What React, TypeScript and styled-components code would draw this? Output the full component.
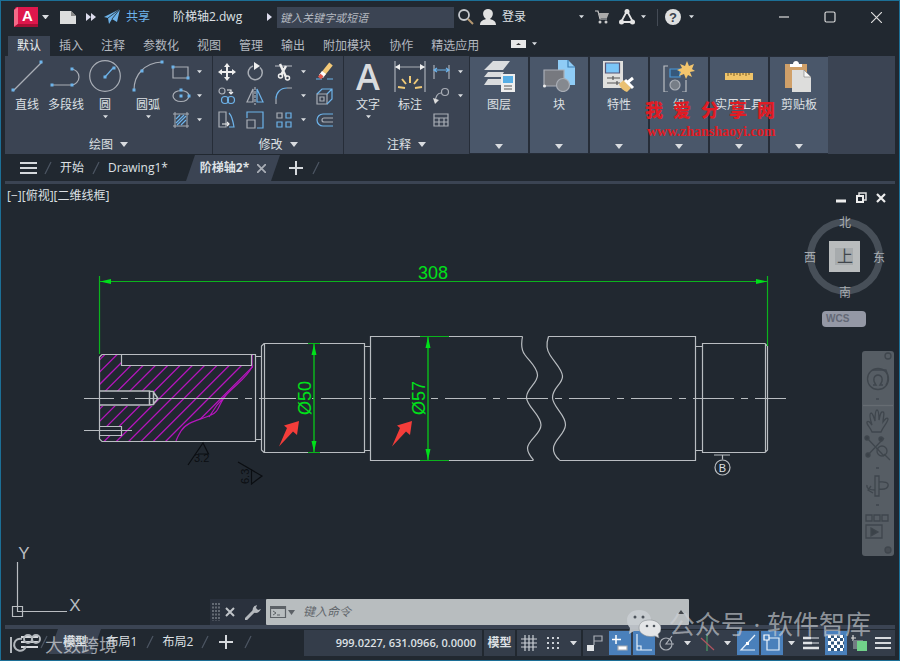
import React from "react";
import styled, { createGlobalStyle, css } from "styled-components";

const cjk = `"Open Sans", "Noto Sans CJK SC", sans-serif`;
const c = {
  edge: "#1c6f96",
  dark: "#212830",
  ribbon: "#3b4453",
  tile: "#4a576a",
  line: "#262d38",
  text: "#dde0e4",
  muted: "#b4b9c0",
  blue: "#6db3ea",
  gray: "#a9aeb6",
  green: "#00e01a",
  wire: "#b9bdc1",
  pink: "#b615bd",
};

const Global = createGlobalStyle`
  * { box-sizing: border-box; }
  body { margin: 0; background: ${c.dark}; font: 12px/16px ${cjk}; color: ${c.text}; }
  button, input { font: inherit; color: inherit; border: 0; background: none; padding: 0; margin: 0; }
  button { cursor: pointer; white-space: nowrap; }
  svg { display: block; flex: none; }
`;

const Frame = styled.div`
  position: relative;
  display: flex;
  flex-direction: column;
  min-height: 100vh;
  border: 1px solid ${c.edge};
  overflow: hidden;
`;

/* ---------- title bar ---------- */
const TitleBar = styled.header`
  display: flex;
  align-items: center;
  height: 32px;
  padding-left: 13px;
`;
const Tool = styled.button<{ $w: number }>`
  display: flex;
  align-items: center;
  justify-content: center;
  gap: 6px;
  flex: none;
  width: ${(p) => p.$w}px;
  height: 24px;
`;
const ShareLabel = styled.span`
  color: ${c.blue};
`;
const FileName = styled.span`
  width: 105px;
  padding-left: 17px;
  flex: none;
  white-space: nowrap;
`;
const TitleSpace = styled.div`
  flex: none;
  width: 60px;
`;
const SearchInput = styled.input`
  flex: 0 0 177px;
  height: 21px;
  padding-left: 3px;
  background: ${c.ribbon};
  font-size: 11px;
  font-style: italic;
  &::placeholder {
    color: ${c.muted};
    opacity: 1;
  }
`;
const Push = styled.div`
  flex: 1;
`;
const Rule = styled.div`
  flex: none;
  width: 1px;
  height: 17px;
  margin: 0 7px 0 9px;
  background: #444b55;
`;

/* ---------- ribbon ---------- */
const RibbonTabs = styled.nav`
  display: flex;
  align-items: flex-end;
  height: 23px;
  padding-left: 7px;
`;
const RibbonTab = styled.button<{ $on?: boolean }>`
  height: 20px;
  padding: 0 9px;
  color: ${(p) => (p.$on ? "#eceef0" : c.muted)};
  background: ${(p) => (p.$on ? c.ribbon : "none")};
`;
const Ribbon = styled.section`
  display: flex;
  height: 98px;
  margin: 0 4px;
  background: ${c.ribbon};
`;
const Panel = styled.div<{ $w: number }>`
  display: flex;
  flex-direction: column;
  flex: none;
  width: ${(p) => p.$w}px;
  border-right: 1px solid ${c.line};
`;
const PanelBody = styled.div`
  display: flex;
  flex: 1;
  padding: 4px 0 0 2px;
`;
const PanelTitle = styled.button`
  display: flex;
  align-items: center;
  justify-content: center;
  gap: 7px;
  height: 19px;
`;
const BigButton = styled.button<{ $w?: number }>`
  display: flex;
  flex-direction: column;
  align-items: center;
  justify-content: flex-start;
  flex: none;
  width: ${(p) => p.$w ?? 40}px;
  svg {
    overflow: visible;
  }
  svg + span {
    margin: 5px 0 2px;
  }
`;
const SmallGrid = styled.div<{ $cols: string }>`
  display: grid;
  align-self: flex-start;
  grid-template-columns: ${(p) => p.$cols};
  grid-auto-rows: 24px;
`;
const Small = styled.button`
  display: flex;
  align-items: center;
  justify-content: center;
`;
const Tiles = styled.div`
  display: flex;
  gap: 2px;
  padding: 1px 0;
  background: ${c.line};
`;
const Tile = styled.button`
  display: flex;
  flex-direction: column;
  align-items: center;
  justify-content: flex-start;
  width: 58px;
  height: 96px;
  padding: 3px 0 4px;
  background: ${c.tile};
  span {
    margin-top: 5px;
  }
  svg:last-child {
    margin-top: auto;
  }
`;

/* ---------- file tabs and layout tabs ---------- */
const FileTabs = styled.nav`
  display: flex;
  align-items: center;
  height: 30px;
  margin: 0 4px;
  padding: 1px 0 0 13px;
  border-bottom: 3px solid ${c.ribbon};
`;
const DocTab = styled.button<{ $w: number; $on?: boolean }>`
  display: flex;
  align-items: center;
  justify-content: center;
  gap: 8px;
  align-self: stretch;
  flex: none;
  width: ${(p) => p.$w}px;
  ${(p) =>
    p.$on &&
    css`
      background: ${c.ribbon};
      font-weight: 700;
      clip-path: polygon(9px 0, 100% 0, calc(100% - 9px) 100%, 0 100%);
    `}
`;
const TabGap = styled.div`
  flex: none;
  width: 16px;
`;

/* ---------- canvas ---------- */
const Canvas = styled.main`
  position: relative;
  flex: 1;
  min-height: 441px;
`;
const Drawing = styled.svg`
  position: absolute;
  inset: 0;
  width: 100%;
  height: 100%;
`;
const ViewLabel = styled.div`
  position: absolute;
  left: 6px;
  top: 4px;
`;
const WindowKeys = styled.div`
  position: absolute;
  right: 11px;
  top: 2px;
  display: flex;
  gap: 6px;
`;
const Cube = styled.svg`
  position: absolute;
  right: 11px;
  top: 29px;
`;
const Wcs = styled.button`
  position: absolute;
  right: 33px;
  top: 127px;
  width: 44px;
  height: 16px;
  padding-left: 4px;
  border-radius: 4px;
  background: #9498a5;
  color: #636876;
  font: 700 10px/16px "Liberation Sans", sans-serif;
  text-align: left;
`;
const NavBar = styled.div`
  position: absolute;
  right: 5px;
  top: 167px;
  width: 32px;
  border-radius: 3px;
  background: #565d64;
`;
const CommandBar = styled.form`
  position: absolute;
  left: 209px;
  right: 210px;
  bottom: 0;
  display: flex;
  height: 26px;
`;
const CommandTools = styled.div`
  display: flex;
  align-items: center;
  width: 56px;
  background: #2a313d;
`;
const CommandField = styled.label`
  display: flex;
  align-items: center;
  flex: 1;
  gap: 8px;
  padding: 0 4px;
  border-radius: 1px;
  background: #b8bdbf;
`;
const CommandInput = styled.input`
  flex: 1;
  min-width: 0;
  font-style: italic;
  &::placeholder {
    color: #62676c;
    opacity: 1;
  }
`;

/* ---------- status bar ---------- */
const StatusBar = styled.footer`
  display: flex;
  height: 35px;
  margin: 0 4px;
  border-top: 4px solid ${c.ribbon};
`;
const LayoutTabs = styled.nav`
  display: flex;
  align-items: center;
  height: 25px;
  padding-left: 14px;
  flex: 1;
`;
const StatusTools = styled.div`
  display: flex;
  gap: 2px;
  height: 26px;
  margin-top: 1px;
`;
const Coordinates = styled.output`
  width: 178px;
  padding-right: 6px;
  background: #343d4a;
  text-align: right;
  font-size: 11px;
  line-height: 26px;
  font-weight: 600;
`;
const Group = styled.div`
  display: flex;
  align-items: center;
  background: #343d4a;
`;
const Toggle = styled.button<{ $w?: number; $on?: boolean; $bold?: boolean }>`
  display: flex;
  align-items: center;
  justify-content: center;
  width: ${(p) => p.$w ?? 24}px;
  height: 24px;
  font-weight: ${(p) => (p.$bold ? 700 : 400)};
  background: ${(p) => (p.$on ? "#4a80bb" : "none")};
  border-left: ${(p) => (p.$on ? "2px solid #343d4a" : "0")};
`;

/* ---------- overlays ---------- */
const RedMark = styled.div`
  position: absolute;
  left: 644px;
  top: 97px;
  color: #e01c24;
  pointer-events: none;
`;
const RedTitle = styled.div`
  display: flex;
  gap: 10px;
  font: 900 18px/22px "Noto Sans CJK SC", sans-serif;
`;
const RedUrl = styled.div`
  padding-left: 2px;
  font: 700 14px/24px "Liberation Serif", serif;
`;
const BrandMark = styled.div`
  position: absolute;
  right: 28px;
  bottom: 20px;
  display: flex;
  align-items: center;
  gap: 8px;
  font: 26px/32px ${cjk};
  color: rgba(205, 209, 214, 0.65);
  pointer-events: none;
`;
const CornerMark = styled.div`
  position: absolute;
  left: 8px;
  bottom: 4px;
  display: flex;
  align-items: center;
  gap: 2px;
  font: 18px/24px "Noto Sans CJK SC", sans-serif;
  color: rgba(205, 209, 214, 0.75);
  pointer-events: none;
`;

/* ---------- icons ---------- */
type IconProps = { w?: number; h?: number; box?: string; children: React.ReactNode };
const Icon = ({ w = 20, h = w, box, children }: IconProps) => (
  <svg width={w} height={h} viewBox={box ?? `0 0 ${w} ${h}`} fill="none" stroke={c.gray} strokeWidth="1.2" aria-hidden="true">
    {children}
  </svg>
);
const Caret = ({ w = 6 }: { w?: number }) => (
  <svg width={w} height={w / 2 + 1} viewBox="0 0 8 5" aria-hidden="true">
    <path d="M0 0h8L4 5z" fill="#d9dce0" />
  </svg>
);
const Dot = ({ x, y }: { x: number; y: number }) => <rect x={x - 1.5} y={y - 1.5} width="3" height="3" fill={c.blue} stroke="none" />;
const Slash = ({ w = 16 }: { w?: number }) => (
  <Icon w={w} h={16}><path d={`M${w / 2 - 3} 14 L${w / 2 + 3} 2`} stroke="#4c5562" strokeWidth="1.3" /></Icon>
);
const Burger = ({ w = 17 }: { w?: number }) => (
  <Icon w={w} h={14}><path d={`M0 2h${w}M0 7h${w}M0 12h${w}`} stroke="#d6d9dd" strokeWidth="2" /></Icon>
);
const Plus = () => (
  <Icon w={14}><path d="M7 0v14M0 7h14" stroke="#d6d9dd" strokeWidth="2" /></Icon>
);

const drawIcons = [
  <Icon key="r"><path d="M2 5h15v11H2z" /><Dot x={2} y={5} /><Dot x={17} y={16} /></Icon>,
  <Icon key="e"><ellipse cx="10" cy="10" rx="8" ry="5.5" /><Dot x={10} y={4} /><Dot x={10} y={10} /><Dot x={18} y={10} /></Icon>,
  <Icon key="h"><path d="M4 2v16M16 2v16M2 4h16M2 16h16" strokeWidth="1" /><path d="M5 9l4-4M5 13l8-8M6 15l9-9M10 15l5-5" stroke={c.blue} /></Icon>,
];
const modifyIcons: [React.ReactNode, React.ReactNode, React.ReactNode, React.ReactNode][] = [
  [
    <Icon key="a"><path d="M10 4v12M4 10h12" stroke="#eee" strokeWidth="2" /><path d="M10 1l3 4H7zM10 19l3-4H7zM1 10l4-3v6zM19 10l-4-3v6z" fill="#eee" stroke="none" /></Icon>,
    <Icon key="b"><path d="M8 4a7 7 0 1 0 7 1.500" strokeWidth="1.5" /><path d="M9 0l6 4-6 4z" fill="#eee" stroke="none" /></Icon>,
    <Icon key="c"><path d="M1 4h17" /><path d="M6 2l6 13M12 4L7 13" stroke="#eee" strokeWidth="2.500" /><circle cx="6.500" cy="14" r="2" stroke="#eee" strokeWidth="1.500" /><circle cx="13.500" cy="16" r="2" stroke="#eee" strokeWidth="1.500" /></Icon>,
    <Icon key="d"><path d="M1 17h6M12 17h6" stroke={c.blue} /><path d="M16 2L8 12" stroke="#f3c978" strokeWidth="4.500" /><path d="M9 10.500L6 14.500" stroke="#fff" strokeWidth="5" /><path d="M7 13L4.500 16" stroke="#e0584c" strokeWidth="4" /></Icon>,
  ],
  [
    <Icon key="a"><circle cx="5" cy="5" r="3" /><path d="M10 4h4v3M12 6l2 2 2-2" stroke="#eee" /><circle cx="8" cy="14" r="3.500" stroke={c.blue} /><circle cx="14" cy="14" r="3.500" stroke={c.blue} /></Icon>,
    <Icon key="b"><path d="M8 3v13H2z" /><path d="M12 3v13h6z" stroke={c.blue} /><path d="M10 1v18" strokeDasharray="3 1" /></Icon>,
    <Icon key="c"><path d="M2 18v-5M13 2h5" /><path d="M2 13C2 7 6 2 13 2" stroke={c.blue} /></Icon>,
    <Icon key="d"><path d="M2 8h10v10H2zM5 11h4v4H5z" /><path d="M2 8l5-5h10v10l-5 5M12 8l5-5" stroke={c.blue} /></Icon>,
  ],
  [
    <Icon key="a"><path d="M2 2h7v15H2z" /><path d="M12 3c3 3 4 8 5 14h-5" stroke={c.blue} /><path d="M5 14h7M10 12l2 2-2 2" stroke="#eee" /></Icon>,
    <Icon key="b"><path d="M2 10h8v8H2z" /><path d="M2 8V2h16v16h-6" stroke={c.blue} /></Icon>,
    <Icon key="c"><path d="M3 3h5v5H3z" /><path d="M12 3h5v5h-5zM3 12h5v5H3zM12 12h5v5h-5z" stroke={c.blue} /></Icon>,
    <Icon key="d"><path d="M18 4H8a6 6 0 0 0 0 12h10" stroke={c.blue} /><path d="M18 8H9a2 2 0 0 0 0 4h9" /></Icon>,
  ],
];

const TileIcon = ({ kind }: { kind: string }) => {
  switch (kind) {
    case "图层":
      return <Icon w={32}><g stroke="none" fill="#dadcde"><path d="M10 1h17l-7 9H1zM5 12h16l-3 5H1zM5 19h13v6H1z" /><path d="M18 14h14v18H18z" fill="#eee" /><path d="M20 16h10v7H20z" fill="#57aee5" /></g><path d="M21 26h8M21 29h8" stroke="#555" /></Icon>;
    case "块":
      return <Icon w={32}><path d="M15 0h10l7 7v18H15z" fill="#8fccf6" stroke="none" /><path d="M25 0v7h7" stroke="#3c7fb4" /><path d="M1 10h20v16H1z" fill="#77797f" /><circle cx="20" cy="25" r="6.500" fill="#85898f" /><circle cx="1.500" cy="26" r="1.500" fill="#eee" stroke="none" /></Icon>;
    case "特性":
      return <Icon w={32}><path d="M0 1h20v27H0z" fill="#e0e0de" stroke="none" /><path d="M2.500 3h14v10h-14z" fill="#7cc6f8" stroke="#557" /><path d="M4 18h13M4 23h13M10 16v4M14 21v4" stroke="#555" /><path d="M16 24l5-4 7 8-4 4c-3-1-7-4-8-8z" fill="#eac173" stroke="none" /><path d="M22 20l4 4 4 4M25 22l5-4" stroke="#fff" strokeWidth="3" /></Icon>;
    case "组":
      return <Icon w={32}><path d="M5 6H1v26h4M19 32h4V20" stroke="#b9bdc2" /><path d="M7 9h10v8H7z" fill="#36587b" stroke="#4a98d8" /><circle cx="12" cy="25" r="5" fill="#777e87" /><path d="M24 1l2 5 5-2-2 5 3 2-5 1 2 5-4-2-2 4-2-5-5 2 2-4-4-2 5-2-2-4 5 2z" fill="#f3c56d" stroke="none" /></Icon>;
    case "实用工具":
      return <Icon w={32}><path d="M2 13h28v7H2z" fill="#f0c469" stroke="none" /><path d="M5 13v3M8 13v2M11 13v3M14 13v2M17 13v3M20 13v2M23 13v3M26 13v2" stroke="#745b28" strokeWidth="1" /></Icon>;
    default:
      return <Icon w={32}><path d="M2 4h22v24H2z" fill="#d0a069" stroke="none" /><path d="M7 4h3c0-4 6-4 6 0h3v3H7z" fill="#fff" stroke="none" /><path d="M9 10h12l7 7v15H9z" fill="#dddddc" stroke="none" /><path d="M21 10v7h7z" fill="#f8f8f8" stroke="#777" strokeWidth=".6" /></Icon>;
  }
};

/* ---------- shaft drawing ---------- */
const hatchSums = Array.from({ length: 20 }, (_, i) => 459.4 + i * 12.3);
const Arrowhead = ({ x, y, turn }: { x: number; y: number; turn: number }) => (
  <path d="M0 0L11 -2.500V2.500z" transform={`translate(${x} ${y}) rotate(${turn})`} fill={c.green} stroke="none" />
);
const dimFont = `"Liberation Sans", sans-serif`;

const Shaft = () => (
  <Drawing viewBox="1 184 898 441" preserveAspectRatio="xMinYMin meet" fill="none" stroke={c.wire} strokeWidth="1.2" role="img" aria-label="阶梯轴">
    <defs>
      <clipPath id="section">
        <path clipRule="evenodd" d="M100 355H121V366H252V355H254L253 368C247 378 238 383 230 391C219 402 219 411 213 414C201 421 187 421 181 431C178 436 177 438 176 441H100ZM100 391V406H153L158 398 153 391ZM100 426V435H121V426Z" />
      </clipPath>
    </defs>
    <g clipPath="url(#section)" stroke={c.pink} strokeWidth="1.3">
      {hatchSums.map((s) => <path key={s} d={`M${s - 350} 350L${s - 446} 446`} />)}
    </g>
    <path d="M252 355V367C247 377 238 383 230 391C217 403 221 411 211 415C201 420 187 421 181 431C178 436 177 438 176 441M226 395L217 405L209 417" stroke={c.pink} />
    <path d="M102 354.500H255.500V441.500H102L99.500 439V357zM121.500 355V365.500H251.500V355" />
    <path d="M99 391H149.500V405H99M149.500 391L153 391.500 158 398.500 153 404.500 149.500 405M153.500 391V405" strokeWidth="1.500" />
    <path d="M99 426.500H121.500V435.500H99M84 430.500H132" />
    <path d="M256 356.500H261.500M256 439.500H261.500M264 343.500H364.500V452.500H264L261.500 450V346zM264.500 344V452M364 346.500H370M364 450.500H370" />
    <path d="M522.500 336.500H370.500V460.500H533.500M522.500 336.500C521 344 521 350 525 355C530 362 537 367 537.500 375C538 383 527 388 526.500 397C526 406 541 415 541 425C541 434 528 440 527.500 448C527.500 453 530 456 533.500 460" />
    <path d="M548.500 336.500H695.500V460.500H559.500M548.500 336.500C546 344 546 349 550 355C555 363 562 369 562.500 376C563 384 552 388 552.500 398C553 407 566 415 565.500 425C565 434 554 440 553.500 448C553 453 556 457 559.500 460" />
    <path d="M696 346.500H702M696 450.500H702M702.500 343.500H765L767.500 346V450L765 452.500H702.500zM765.500 344V452" />
    <path d="M84 398.500H786" strokeDasharray="41 7 7 7" strokeDashoffset="11" />
    <path d="M157 398.500H238" />
    <path d="M714 455H730M722.500 455V459.500" /><circle cx="722.500" cy="467.500" r="7.500" />
    <text x="722.500" y="471.500" textAnchor="middle" fontSize="11" fontFamily={dimFont} fill={c.text} stroke="none">B</text>

    <g stroke={c.green}>
      <path d="M99.500 276V354M767.500 276V346M99 281.500H768" stroke="#0bb41d" />
      <path d="M314 344V452M428 337V460" stroke="#0bb41d" strokeWidth="1.500" />
      <path d="M308 343.500H320M308 452.500H320M420 336.500H449M420 460.500H449" stroke="#0bb41d" />
      <Arrowhead x={100} y={281.5} turn={0} /><Arrowhead x={767} y={281.5} turn={180} />
      <Arrowhead x={314} y={344} turn={90} /><Arrowhead x={314} y={452} turn={-90} />
      <Arrowhead x={428} y={337} turn={90} /><Arrowhead x={428} y={460} turn={-90} />
    </g>
    <path d="M296 396h16v5H296zM410 396h15v5H410z" fill={c.dark} stroke="none" />
    <g fill={c.green} stroke="none" fontSize="18" fontFamily={dimFont}>
      <text x="433" y="279" textAnchor="middle">308</text>
      <text transform="translate(311 415) rotate(-90)">Ø50</text>
      <text transform="translate(425 415) rotate(-90)">Ø57</text>
    </g>
    <path d="M299 421L297 435 293 431.500 279 446.500 287 428 284 425.500z" fill="#f43d3a" stroke="none" />
    <path d="M412 421L410 435 406 431.500 392 446.500 400 428 397 425.500z" fill="#f43d3a" stroke="none" />
    <g stroke="#0b0e12">
      <path d="M188 465L203 443 208.500 454H198M238 462L262 476 251.500 484V469" />
      <g fill="#0b0e12" stroke="none" fontSize="11" fontFamily={dimFont}>
        <text x="194" y="462">3.2</text>
        <text transform="translate(249 484) rotate(-90)">6.3</text>
      </g>
    </g>
    <path d="M17.500 562V606M22.500 611.500H67M12.500 606.500h10v10h-10zM17.500 606v5.500H23" />
    <g fill={c.wire} stroke="none" fontSize="17" fontFamily={dimFont}>
      <text x="24" y="559" textAnchor="middle">Y</text>
      <text x="75" y="611" textAnchor="middle">X</text>
    </g>
  </Drawing>
);

const tabs = ["默认", "插入", "注释", "参数化", "视图", "管理", "输出", "附加模块", "协作", "精选应用"];
const tiles = ["图层", "块", "特性", "组", "实用工具", "剪贴板"];

export default function App() {
  return (
    <Frame>
      <Global />
      <TitleBar>
        <Tool $w={24} aria-label="应用程序菜单">
          <svg width="24" height="20" viewBox="0 0 24 20">
            <path d="M2 0h22v20H0V3z" fill="#df174c" /><path d="M0 3l4-3v17l-4 3z" fill="#f36a87" /><path d="M0 20l4-3h20v3z" fill="#a80f35" />
            <text x="13.500" y="14" textAnchor="middle" fontFamily={dimFont} fontWeight="700" fontSize="15" fill="#fff">A</text>
          </svg>
        </Tool>
        <Tool $w={14} aria-label="菜单"><Caret w={7} /></Tool>
        <Tool $w={32} aria-label="新建"><Icon w={16} h={13}><path d="M0 0h11l5 5v8H0z" fill="#dcdddd" stroke="none" /><path d="M11 0v5h5z" fill="#888" stroke="none" /></Icon></Tool>
        <Tool $w={14} aria-label="更多"><Icon w={10} h={8}><path d="M0 0l5 4-5 4zM5 0l5 4-5 4z" fill="#dde" stroke="none" /></Icon></Tool>
        <Tool $w={58}>
          <Icon w={16}><path d="M0 8L16 0l-3 13-5-3-3 5-1-6z" fill={c.blue} stroke="none" /><path d="M4 9l12-9-8 10" stroke={c.dark} strokeWidth=".8" /></Icon>
          <ShareLabel>共享</ShareLabel>
        </Tool>
        <FileName>阶梯轴2.dwg</FileName>
        <Tool $w={16} aria-label="展开"><Icon w={5} h={8}><path d="M0 0l5 4-5 4z" fill="#dde" stroke="none" /></Icon></Tool>
        <SearchInput aria-label="搜索" placeholder="键入关键字或短语" />
        <Tool $w={24} aria-label="查找"><Icon w={16}><circle cx="6" cy="6" r="5" stroke="#c3c7cc" strokeWidth="1.800" /><path d="M10 10l5 5" stroke="#b59871" strokeWidth="2" /></Icon></Tool>
        <Tool $w={50}>
          <Icon w={16}><path d="M0 16c0-4 3-5 6-6-5-4-3-10 2-10s7 6 2 10c3 1 6 2 6 6z" fill="#e1e1e1" stroke="none" /></Icon>登录
        </Tool>
        <Push />
        <Tool $w={14} aria-label="账户"><Caret w={5} /></Tool>
        <Tool $w={28} aria-label="商店"><Icon w={14}><path d="M0 1h3l2 8h7" stroke="#c9c9c9" /><path d="M3 3h11l-2 5H5z" fill="#aaa" stroke="none" /><circle cx="5" cy="12" r="1.500" fill="#ccc" stroke="none" /><circle cx="11" cy="12" r="1.500" fill="#ccc" stroke="none" /></Icon></Tool>
        <Tool $w={22} aria-label="Autodesk App"><Icon w={16}><path d="M8 2l-6 11h12z" stroke="#e5e5e5" strokeWidth="1.800" /><circle cx="8" cy="2.500" r="2.500" fill="#e5e5e5" stroke="none" /><circle cx="2.500" cy="13" r="2.500" fill="#e5e5e5" stroke="none" /><circle cx="13.500" cy="13" r="2.500" fill="#e5e5e5" stroke="none" /></Icon></Tool>
        <Tool $w={10} aria-label="应用列表"><Caret w={5} /></Tool>
        <Rule />
        <Tool $w={16} aria-label="帮助">
          <svg width="16" height="16" viewBox="0 0 16 16"><circle cx="8" cy="8" r="8" fill="#dedfe0" /><text x="8" y="12.500" textAnchor="middle" fontFamily={dimFont} fontWeight="700" fontSize="13" fill="#39414c">?</text></svg>
        </Tool>
        <Tool $w={20} aria-label="帮助列表"><Caret w={5} /></Tool>
        <TitleSpace />
        <Tool $w={46} aria-label="最小化"><Icon w={10} h={2}><path d="M0 1h10" stroke="#ddd" /></Icon></Tool>
        <Tool $w={46} aria-label="最大化"><Icon w={12}><rect x="1" y="1" width="10" height="10" rx="1.500" stroke="#ddd" /></Icon></Tool>
        <Tool $w={46} aria-label="关闭"><Icon w={11}><path d="M0 0l11 11M11 0L0 11" stroke="#ddd" /></Icon></Tool>
      </TitleBar>

      <RibbonTabs>
        {tabs.map((t, i) => <RibbonTab key={t} $on={i === 0}>{t}</RibbonTab>)}
        <Tool $w={72} aria-label="折叠功能区">
          <Icon w={15} h={8}><path d="M0 0h15v8H0z" fill="#e8e8e8" stroke="none" /><path d="M5 5h5L7.500 3z" fill="#333" stroke="none" /></Icon><Caret w={5} />
        </Tool>
      </RibbonTabs>

      <Ribbon>
        <Panel $w={208}>
          <PanelBody>
            <BigButton><Icon w={32}><path d="M2 31L31 2" /><Dot x={2} y={30} /><Dot x={30} y={2} /></Icon><span>直线</span></BigButton>
            <BigButton $w={38}><Icon w={32}><path d="M1 25h20a7.500 7.500 0 0 0 0-16" /><Dot x={2} y={25} /><Dot x={22} y={25} /><Dot x={22} y={9} /></Icon><span>多段线</span></BigButton>
            <BigButton><Icon w={32}><circle cx="16" cy="16" r="15.300" /><path d="M16 17l8-9" stroke={c.blue} /><Dot x={16} y={17} /><Dot x={25} y={8} /></Icon><span>圆</span><Caret w={5} /></BigButton>
            <BigButton $w={46}><Icon w={32}><path d="M2 30C2 15 12 3 30 2" /><Dot x={2} y={30} /><Dot x={10} y={11} /><Dot x={30} y={2} /></Icon><span>圆弧</span><Caret w={5} /></BigButton>
            <SmallGrid $cols="20px 16px">
              {drawIcons.map((ic, i) => (
                <React.Fragment key={i}><Small aria-label="绘图工具">{ic}</Small><Small aria-label="更多绘图工具"><Caret w={5} /></Small></React.Fragment>
              ))}
            </SmallGrid>
          </PanelBody>
          <PanelTitle>绘图<Caret w={8} /></PanelTitle>
        </Panel>
        <Panel $w={131}>
          <PanelBody>
            <SmallGrid $cols="24px 32px 26px 12px 32px">
              {modifyIcons.map((row, i) => (
                <React.Fragment key={i}>
                  <Small aria-label="修改工具">{row[0]}</Small><Small aria-label="修改工具">{row[1]}</Small><Small aria-label="修改工具">{row[2]}</Small>
                  <Small aria-label="更多修改工具"><Caret w={5} /></Small><Small aria-label="修改工具">{row[3]}</Small>
                </React.Fragment>
              ))}
            </SmallGrid>
          </PanelBody>
          <PanelTitle>修改<Caret w={8} /></PanelTitle>
        </Panel>
        <Panel $w={126}>
          <PanelBody>
            <BigButton $w={44}>
              <svg width="32" height="32" viewBox="0 0 32 32"><text x="16" y="30" textAnchor="middle" fontFamily='"Open Sans", sans-serif' fontWeight="600" fontSize="36" fill="#d9dbdd">A</text></svg>
              <span>文字</span><Caret w={5} />
            </BigButton>
            <BigButton>
              <Icon w={32}><path d="M1 1v31M31 1v31M1 7h30" /><path d="M1 7l5-3v6zM31 7l-5-3v6z" fill="#eee" stroke="none" /><path d="M16 16v7M8 19l4 5M24 19l-4 5M4 27l7 1M28 27l-7 1" stroke="#f0ca78" strokeWidth="2" /></Icon>
              <span>标注</span>
            </BigButton>
            <SmallGrid $cols="22px 16px">
              <Small aria-label="线性"><Icon><path d="M3 3v14M18 3v14" /><path d="M3 8h15M6 6L3 8l3 2M15 6l3 2-3 2" stroke={c.blue} /></Icon></Small><Small aria-label="更多标注"><Caret w={5} /></Small>
              <Small aria-label="引线"><Icon><circle cx="14" cy="6" r="3.500" /><path d="M10 7c-4 0-5 4-6 8" /><path d="M2 12l2 6 4-4z" fill="#ddd" stroke="none" /></Icon></Small><Small aria-label="更多引线"><Caret w={5} /></Small>
              <Small aria-label="表格"><Icon><path d="M3 4h14v12H3zM3 8h14M3 12h14M8 8v8M13 8v8" /></Icon></Small>
            </SmallGrid>
          </PanelBody>
          <PanelTitle>注释<Caret w={8} /></PanelTitle>
        </Panel>
        <Tiles>
          {tiles.map((t) => <Tile key={t}><TileIcon kind={t} /><span>{t}</span><Caret w={8} /></Tile>)}
        </Tiles>
      </Ribbon>

      <FileTabs>
        <DocTab $w={20} aria-label="文件菜单"><Burger /></DocTab>
        <Slash w={20} />
        <DocTab $w={28}>开始</DocTab>
        <Slash w={20} />
        <DocTab $w={64}>Drawing1*</DocTab>
        <TabGap />
        <DocTab $w={94} $on>阶梯轴2*<Icon w={9}><path d="M0 0l9 9M9 0L0 9" strokeWidth="1.800" /></Icon></DocTab>
        <DocTab $w={32} aria-label="新建图形"><Plus /></DocTab>
        <Slash w={8} />
      </FileTabs>

      <Canvas>
        <Shaft />
        <ViewLabel>[−][俯视][二维线框]</ViewLabel>
        <WindowKeys>
          <Tool $w={14} aria-label="最小化视口"><Icon w={10} h={12}><path d="M0 9h10" stroke="#eee" strokeWidth="3" /></Icon></Tool>
          <Tool $w={14} aria-label="还原视口"><Icon w={12}><path d="M4 3V1h7v7H9" stroke="#ddd" strokeWidth="1.500" /><path d="M2 4h6v6H2z" stroke="#eee" strokeWidth="2" /></Icon></Tool>
          <Tool $w={14} aria-label="关闭视口"><Icon w={10}><path d="M1 1l8 8M9 1L1 9" stroke="#eee" strokeWidth="2.200" /></Icon></Tool>
        </WindowKeys>
        <Cube width="86" height="86" viewBox="802 213 86 86" role="img" aria-label="视图方位">
          <circle cx="845" cy="256.500" r="34.500" fill="none" stroke="#474f58" strokeWidth="7" />
          <path d="M829 241h31v31h-31z" fill="#b9bcbd" /><path d="M835 248h18v17h-18z" fill="#a7abad" />
          <g fill="#a8adb2" fontSize="12" textAnchor="middle" fontFamily='"Noto Sans CJK SC", sans-serif'>
            <text x="845" y="227">北</text><text x="810" y="262">西</text><text x="879" y="262">东</text><text x="845" y="297">南</text>
            <text x="845" y="262" fontSize="16" fill="#41474d">上</text>
          </g>
        </Cube>
        <Wcs>WCS</Wcs>
        <NavBar>
          <Icon w={32} h={205} box="862 351 32 205">
            <g stroke="#3f464d" strokeWidth="1.300">
              <path d="M863 405.500h30" stroke="#666c72" /><circle cx="888" cy="356" r="3" /><circle cx="888" cy="550" r="3" fill="#474d54" />
              <circle cx="878" cy="379" r="10.500" /><path d="M873 385h3c-4-5-2-10 2-10s6 5 2 10h3M873 370h13c3 6 2 12 0 15" />
              <path d="M872 432c-2-5-6-8-5-10 2-2 4 2 5 3-2-6-3-11-1-12 2 0 3 5 4 8 0-5 0-11 2-11s2 6 2 10c1-5 2-9 4-8 2 0 0 6 0 10 2-3 4-5 5-3 0 3-5 8-7 13z" />
              <path d="M867 438l17 18M884 438l-17 18M884 454l6 6" /><circle cx="882" cy="451" r="5" /><circle cx="867" cy="438" r="2" fill="#3b4249" /><circle cx="881" cy="439" r="2" fill="#3b4249" /><circle cx="868" cy="455" r="2" fill="#3b4249" />
              <path d="M875 476v20h4v-20zM867 485c-1 4 4 5 8 5M879 489c6 1 10-1 9-5-2-3-6-2-9-2M871 486l-3 4 5 3" />
              <path d="M866 515h6v6h-6zM874 515h6v6h-6zM882 515h6v6h-6zM866 525h16v13h-16z" /><path d="M871 528l7 4-7 4z" fill="#3b4249" />
              <path d="M876 399h3M876 468h3M876 505h3" />
            </g>
          </Icon>
        </NavBar>
        <CommandBar onSubmit={(e) => e.preventDefault()}>
          <CommandTools>
            <Icon w={10} h={20}><path d="M3 1v18M6 1v18M9 1v18" stroke="#8a9098" strokeDasharray="2 1.500" /></Icon>
            <Tool $w={20} type="button" aria-label="关闭命令行"><Icon w={10}><path d="M1 1l8 8M9 1L1 9" stroke="#c0c4c9" strokeWidth="2" /></Icon></Tool>
            <Tool $w={26} type="button" aria-label="自定义"><Icon w={16}><path d="M1 15l8-8" stroke="#b4b8bd" strokeWidth="3" strokeLinecap="round" /><path d="M12 1C8 2 7 5 8 8c3 2 6 1 8-3l-3 1-2-2z" fill="#b4b8bd" stroke="none" /></Icon></Tool>
          </CommandTools>
          <CommandField>
            <Icon w={25} h={14}><path d="M.5 1.500h15v11H.5z" stroke="#5c6166" /><path d="M0 1h16v3H0z" fill="#5c6166" stroke="none" /><path d="M3 6l3 2-3 2M7 10h3" stroke="#5c6166" strokeWidth="1" /><path d="M18 5h7l-3.500 5z" fill="#5c6166" stroke="none" /></Icon>
            <CommandInput aria-label="命令" placeholder="键入命令" />
            <Icon w={8} h={6}><path d="M1 5h6L4 1z" fill="#41464b" stroke="none" /></Icon>
          </CommandField>
        </CommandBar>
      </Canvas>

      <StatusBar>
        <LayoutTabs>
          <DocTab $w={20} aria-label="布局菜单"><Burger /></DocTab>
          <Slash w={10} />
          <DocTab $w={52} $on>模型</DocTab>
          <DocTab $w={42}>布局1</DocTab>
          <Slash w={14} />
          <DocTab $w={42}>布局2</DocTab>
          <Slash w={12} />
          <DocTab $w={30} aria-label="新建布局"><Plus /></DocTab>
          <Slash w={14} />
        </LayoutTabs>
        <StatusTools>
          <Coordinates>999.0227, 631.0966, 0.0000</Coordinates>
          <Group><Toggle $w={31} $bold>模型</Toggle></Group>
          <Group>
            <Toggle aria-label="栅格"><Icon w={16}><path d="M4 0v16M8 0v16M12 0v16M0 4h16M0 8h16M0 12h16" stroke="#cbd0d6" /></Icon></Toggle>
            <Toggle aria-label="捕捉"><Icon w={14}><path d="M1 2h12M1 7h12M1 12h12" stroke="#cbd0d6" strokeWidth="2" strokeDasharray="2 3" /></Icon></Toggle>
            <Toggle $w={16} aria-label="捕捉设置"><Caret w={7} /></Toggle>
          </Group>
          <Group>
            <Toggle aria-label="推断约束"><Icon w={16}><path d="M0 10h7v6H0z" fill="#e0e3e6" stroke="none" /><path d="M7 10V1h8v5H7" /></Icon></Toggle>
            <Toggle $on aria-label="动态输入"><Icon w={16}><path d="M4 0v9M0 4.500h9" stroke="#fff" strokeWidth="1.500" /><path d="M6 11h9v4H6z" fill="#fff" /></Icon></Toggle>
            <Toggle $on aria-label="正交"><Icon w={18}><path d="M2 0v16h15M2 12h4v4" stroke="#e7f1fb" /></Icon></Toggle>
            <Toggle aria-label="极轴追踪"><Icon w={16}><circle cx="7" cy="9" r="6" /><path d="M15 9H7l6-8" /></Icon></Toggle>
            <Toggle $w={16} aria-label="极轴设置"><Caret w={7} /></Toggle>
            <Toggle aria-label="等轴测"><Icon w={16}><path d="M8 0v16" stroke="#4b9b65" /><path d="M2 3l13 12" stroke="#af5560" /></Icon></Toggle>
            <Toggle $w={16} aria-label="等轴测设置"><Caret w={7} /></Toggle>
            <Toggle $on aria-label="对象捕捉追踪"><Icon w={18}><path d="M16 1L2 16h14" stroke="#e7f1fb" /><path d="M7 8h3v3H7z" fill="#fff" stroke="none" /></Icon></Toggle>
            <Toggle $on aria-label="对象捕捉"><Icon w={18}><path d="M4 4h12v12H4z" stroke="#e7f1fb" /><path d="M1 1h5v5H1z" fill="#4a80bb" stroke="#fff" /></Icon></Toggle>
            <Toggle $w={16} aria-label="捕捉列表"><Caret w={7} /></Toggle>
            <Toggle aria-label="线宽"><Icon w={16}><path d="M0 3h16M0 8h16" strokeWidth="1.500" /><path d="M0 3h8M0 8h9M0 13h16" stroke="#e0e3e6" strokeWidth="2.500" /></Icon></Toggle>
            <Toggle $on aria-label="透明度"><Icon w={16}><path d="M0 0h16v16H0z" fill="#fff" stroke="none" /><path d="M0 4.500h16M0 11.500h16" stroke="#31567c" strokeWidth="3" strokeDasharray="3 3" /><path d="M3 1.500h13M3 8h13M3 14.500h13" stroke="#31567c" strokeWidth="3" strokeDasharray="3 3" /></Icon></Toggle>
            <Toggle aria-label="选择循环"><Icon w={16}><path d="M2 0v6M0 3h5" stroke="#ddd" /><path d="M2 5h10v9H2z" fill="#727c83" stroke="none" /><path d="M6 6h10v10H6z" fill="#71d18a" stroke="none" /></Icon></Toggle>
            <Toggle aria-label="自定义状态栏"><Burger w={16} /></Toggle>
          </Group>
        </StatusTools>
      </StatusBar>

      <RedMark>
        <RedTitle>{[..."我爱分享网"].map((s) => <span key={s}>{s}</span>)}</RedTitle>
        <RedUrl>www.zhanshaoyi.com</RedUrl>
      </RedMark>
      <BrandMark>
        <svg width="34" height="28" viewBox="0 0 34 28" aria-hidden="true">
          <path d="M12 0c7 0 12 4 12 10s-5 11-12 11l-5 0-5 3 1-6C1 16 0 13 0 10 0 4 5 0 12 0z" fill="#c9cdd1" opacity=".9" />
          <path d="M23 10c6 0 11 4 11 8 0 3-1 5-3 6l1 4-4-2c-8 2-16-2-16-8s5-8 11-8z" fill="#e3e5e7" stroke="#8b9096" strokeWidth=".6" />
          <g fill="#4c535b"><circle cx="8" cy="7" r="1.500" /><circle cx="16" cy="7" r="1.500" /><circle cx="20" cy="16" r="1.300" /><circle cx="27" cy="16" r="1.300" /></g>
        </svg>
        公众号 · 软件智库
      </BrandMark>
      <CornerMark>
        <svg width="34" height="24" viewBox="0 0 34 24" fill="none" stroke="#b2b7bc" strokeWidth="2" aria-hidden="true">
          <path d="M2 5v16" /><path d="M13 7a6 6 0 1 0 4 7" /><circle cx="19" cy="7" r="4" /><circle cx="27" cy="7" r="4" />
        </svg>
        大数跨境
      </CornerMark>
    </Frame>
  );
}
